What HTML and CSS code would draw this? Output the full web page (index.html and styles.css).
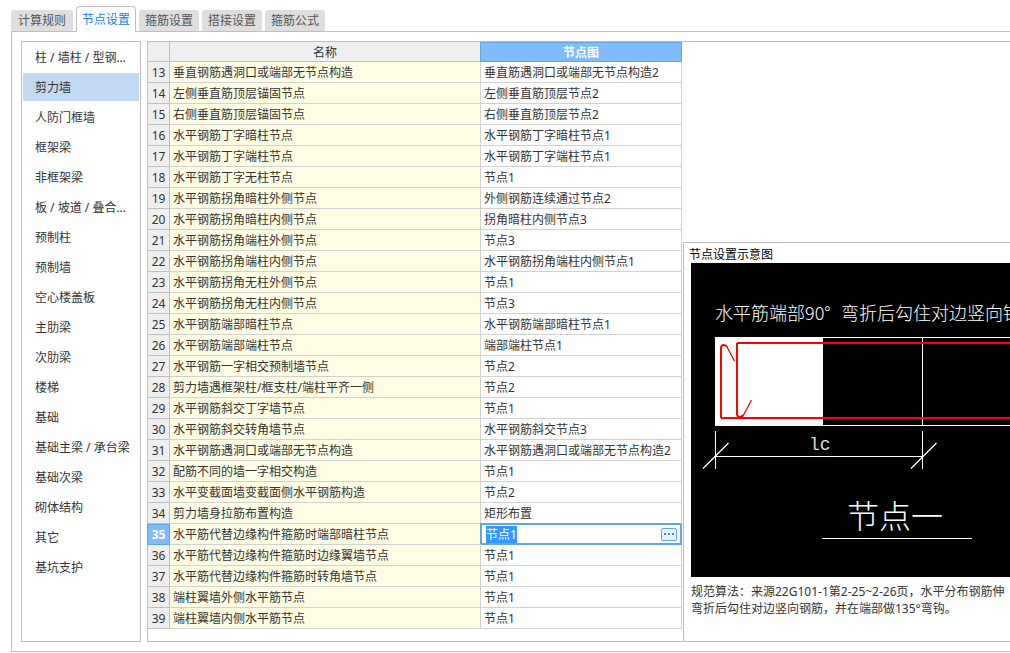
FILE: index.html
```html
<!DOCTYPE html>
<html lang="zh-CN">
<head>
<meta charset="utf-8">
<title>节点设置</title>
<link rel="stylesheet" href="styles.css">
</head>
<body>
<main class="settings">
  <nav class="tabs" role="tablist">
    <button class="tab tab-first" role="tab">计算规则</button>
    <button class="tab tab-active" role="tab" aria-selected="true">节点设置</button>
    <button class="tab" role="tab">箍筋设置</button>
    <button class="tab" role="tab">搭接设置</button>
    <button class="tab" role="tab">箍筋公式</button>
  </nav>
  <section class="page">
    <nav class="categories">
      <button class="category">柱 / 墙柱 / 型钢...</button>
      <button class="category category-active">剪力墙</button>
      <button class="category">人防门框墙</button>
      <button class="category">框架梁</button>
      <button class="category">非框架梁</button>
      <button class="category">板 / 坡道 / 叠合...</button>
      <button class="category">预制柱</button>
      <button class="category">预制墙</button>
      <button class="category">空心楼盖板</button>
      <button class="category">主肋梁</button>
      <button class="category">次肋梁</button>
      <button class="category">楼梯</button>
      <button class="category">基础</button>
      <button class="category">基础主梁 / 承台梁</button>
      <button class="category">基础次梁</button>
      <button class="category">砌体结构</button>
      <button class="category">其它</button>
      <button class="category">基坑支护</button>
    </nav>
    <div class="workspace">
      <table class="nodes">
        <colgroup><col class="col-number"><col class="col-name"><col class="col-node"></colgroup>
        <thead>
          <tr><th></th><th>名称</th><th class="head-active">节点图</th></tr>
        </thead>
        <tbody>
          <tr><th>13</th><td>垂直钢筋遇洞口或端部无节点构造</td><td>垂直筋遇洞口或端部无节点构造2</td></tr>
          <tr><th>14</th><td>左侧垂直筋顶层锚固节点</td><td>左侧垂直筋顶层节点2</td></tr>
          <tr><th>15</th><td>右侧垂直筋顶层锚固节点</td><td>右侧垂直筋顶层节点2</td></tr>
          <tr><th>16</th><td>水平钢筋丁字暗柱节点</td><td>水平钢筋丁字暗柱节点1</td></tr>
          <tr><th>17</th><td>水平钢筋丁字端柱节点</td><td>水平钢筋丁字端柱节点1</td></tr>
          <tr><th>18</th><td>水平钢筋丁字无柱节点</td><td>节点1</td></tr>
          <tr><th>19</th><td>水平钢筋拐角暗柱外侧节点</td><td>外侧钢筋连续通过节点2</td></tr>
          <tr><th>20</th><td>水平钢筋拐角暗柱内侧节点</td><td>拐角暗柱内侧节点3</td></tr>
          <tr><th>21</th><td>水平钢筋拐角端柱外侧节点</td><td>节点3</td></tr>
          <tr><th>22</th><td>水平钢筋拐角端柱内侧节点</td><td>水平钢筋拐角端柱内侧节点1</td></tr>
          <tr><th>23</th><td>水平钢筋拐角无柱外侧节点</td><td>节点1</td></tr>
          <tr><th>24</th><td>水平钢筋拐角无柱内侧节点</td><td>节点3</td></tr>
          <tr><th>25</th><td>水平钢筋端部暗柱节点</td><td>水平钢筋端部暗柱节点1</td></tr>
          <tr><th>26</th><td>水平钢筋端部端柱节点</td><td>端部端柱节点1</td></tr>
          <tr><th>27</th><td>水平钢筋一字相交预制墙节点</td><td>节点2</td></tr>
          <tr><th>28</th><td>剪力墙遇框架柱/框支柱/端柱平齐一侧</td><td>节点2</td></tr>
          <tr><th>29</th><td>水平钢筋斜交丁字墙节点</td><td>节点1</td></tr>
          <tr><th>30</th><td>水平钢筋斜交转角墙节点</td><td>水平钢筋斜交节点3</td></tr>
          <tr><th>31</th><td>水平钢筋遇洞口或端部无节点构造</td><td>水平钢筋遇洞口或端部无节点构造2</td></tr>
          <tr><th>32</th><td>配筋不同的墙一字相交构造</td><td>节点1</td></tr>
          <tr><th>33</th><td>水平变截面墙变截面侧水平钢筋构造</td><td>节点2</td></tr>
          <tr><th>34</th><td>剪力墙身拉筋布置构造</td><td>矩形布置</td></tr>
          <tr>
            <th class="number-active">35</th>
            <td>水平筋代替边缘构件箍筋时端部暗柱节点</td>
            <td class="editing">
              <div class="editor">
                <input class="editor-input" type="text" value="节点1" aria-label="节点图">
                <button class="editor-more" aria-label="更多">
                  <svg width="10" height="2" viewBox="0 0 10 2"><path d="M0 0h2v2H0zM4 0h2v2H4zM8 0h2v2H8z" fill="#3f8ce0"/></svg>
                </button>
              </div>
            </td>
          </tr>
          <tr><th>36</th><td>水平筋代替边缘构件箍筋时边缘翼墙节点</td><td>节点1</td></tr>
          <tr><th>37</th><td>水平筋代替边缘构件箍筋时转角墙节点</td><td>节点1</td></tr>
          <tr><th>38</th><td>端柱翼墙外侧水平筋节点</td><td>节点1</td></tr>
          <tr><th>39</th><td>端柱翼墙内侧水平筋节点</td><td>节点1</td></tr>
        </tbody>
      </table>
      <aside class="preview">
        <h2 class="preview-title">节点设置示意图</h2>
        <svg class="drawing" role="img" aria-label="节点一">
          <text class="cad cad-note" x="24" y="57">水平筋端部90°</text>
          <text class="cad cad-note" x="150" y="57">弯折后勾住对边竖向钢</text>
          <g fill="#fff" shape-rendering="crispEdges">
            <rect x="24" y="74" width="108" height="89"/>
            <rect x="24" y="74" width="100%" height="1"/>
            <rect x="24" y="162" width="100%" height="1"/>
            <rect x="231" y="74" width="1" height="89"/>
            <rect x="24" y="168" width="1" height="38"/>
            <rect x="231" y="168" width="1" height="38"/>
            <rect x="24" y="193" width="208" height="1"/>
            <rect x="131" y="275" width="150" height="1"/>
          </g>
          <path d="M12 205.500L37.500 180M220 205.500L245.500 180" stroke="#fff" stroke-width="1.300" fill="none"/>
          <g fill="#f00" shape-rendering="crispEdges">
            <rect x="46" y="79" width="100%" height="2"/>
            <rect x="30" y="154" width="100%" height="2"/>
            <rect x="29" y="84" width="2" height="71"/>
            <rect x="45" y="80" width="2" height="72"/>
          </g>
          <path d="M30 85Q30 82 33 82Q35 82 36 84M46 151Q46 154 49 154Q51 154 52 152" stroke="#f00" stroke-width="2" fill="none"/>
          <path d="M35.500 83L43.500 98M51.500 154L60.500 137" stroke="#f00" fill="none" stroke-width="1.300"/>
          <text class="cad cad-dimension" x="118" y="187">lc</text>
          <text class="cad cad-title" x="156" y="265">节点一</text>
        </svg>
        <p class="preview-note">规范算法：来源22G101-1第2-25~2-26页，水平分布钢筋伸<br>弯折后勾住对边竖向钢筋，并在端部做135°弯钩。</p>
      </aside>
    </div>
  </section>
</main>
<script src="select.js"></script>
</body>
</html>
```

FILE: styles.css
```css
* {
  box-sizing: border-box;
}

body {
  margin: 0;
  background: #fff;
  color: #333;
  font: 12px/16px "Noto Sans", "Noto Sans CJK SC", sans-serif;
  overflow-x: hidden;
}

button,
input {
  font: inherit;
  color: inherit;
  margin: 0;
  padding: 0;
  border: 0;
  background: none;
}

.settings {
  padding: 6px 0 1px 11px;
}

.tabs {
  display: flex;
  align-items: flex-end;
  gap: 3px;
}

.tab {
  height: 21px;
  padding: 1px 6px 0;
  border-radius: 3px 3px 0 0;
  background: #dedede;
  color: #555;
}

.tab-first {
  padding: 1px 7px 0;
}

.tab-active {
  position: relative;
  height: 26px;
  margin-bottom: -1px;
  padding: 0 5px;
  border: 1px solid #bfbfbf;
  border-bottom: 0;
  border-radius: 4px 4px 0 0;
  background: #fff;
  color: #1a7ce0;
}

.page {
  display: flex;
  gap: 6px;
  padding: 9px 0 9px 9px;
  border: 1px solid #bfbfbf;
  border-right: 0;
}

.categories {
  display: flex;
  flex: none;
  flex-direction: column;
  gap: 2px;
  width: 120px;
  padding: 1px;
  border: 1px solid #bfbfbf;
}

.category {
  height: 28px;
  padding: 2px 0 0 12px;
  text-align: left;
  white-space: nowrap;
}

.category-active {
  background: #c2d9f2;
}

.workspace {
  display: flex;
  flex: 1;
  min-width: 0;
  border: 1px solid #bfbfbf;
  border-right: 0;
}

.nodes {
  flex: none;
  align-self: flex-start;
  width: 534px;
  margin-bottom: 12px;
  border-spacing: 0;
  table-layout: fixed;
}

.col-number {
  width: 22px;
}

.col-name {
  width: 311px;
}

.col-node {
  width: 201px;
}

.nodes th,
.nodes td {
  height: 21px;
  padding: 2px 3px 0;
  border: solid #d2d2d2;
  border-width: 0 1px 1px 0;
  white-space: nowrap;
}

.nodes th {
  padding: 2px 0 0;
  border-color: #bfbfbf;
  background: #efefef;
  font-weight: 400;
  text-align: center;
}

.nodes thead th {
  height: 20px;
}

.nodes td:nth-child(2) {
  background: #fffee5;
}

.nodes .head-active,
.nodes .number-active {
  border-color: #64a5e8;
  background: #80bbfb;
  box-shadow: -1px 0 #64a5e8, inset 0 1px #64a5e8;
  color: #fff;
  font-weight: 700;
}

.nodes .editing {
  padding: 0 4px 0 5px;
  border-color: #64a5e8;
  box-shadow: -1px -1px #64a5e8, inset 1px 1px #64a5e8, inset -1px -1px #64a5e8;
}

.editor {
  display: flex;
  align-items: center;
}

.editor-input {
  flex: 1;
  min-width: 0;
  height: 17px;
  line-height: 17px;
  outline: 0;
}

.editor-input::selection {
  background: #3399ff;
  color: #fff;
}

.editor-more {
  display: flex;
  align-items: center;
  justify-content: center;
  width: 16px;
  height: 13px;
  border: 1px solid #64a5e8;
  border-radius: 2px;
  background: #eaf2fb;
}

.preview {
  flex: 1;
  align-self: flex-end;
  min-width: 0;
  margin-left: 1px;
  padding: 0 0 24px 7px;
  border: solid #bfbfbf;
  border-width: 1px 0 0 1px;
  overflow: hidden;
}

.preview-title {
  margin: 0 0 0 -2px;
  padding-top: 4px;
  color: #000;
  font-size: 12px;
  font-weight: 400;
  line-height: 16px;
}

.drawing {
  display: block;
  width: 100%;
  height: 314px;
  background: #000;
}

.cad {
  fill: #fff;
  font-family: "Noto Sans CJK SC", sans-serif;
  font-weight: 300;
}

.cad-note {
  font-size: 18px;
}

.cad-dimension {
  fill: #ddd;
  font-family: "Liberation Mono", monospace;
  font-size: 18px;
}

.cad-title {
  font-size: 32px;
}

.preview-note {
  margin: 6px 0 0;
  line-height: 17px;
  white-space: nowrap;
}
```

FILE: select.js
```js
const editorInput = document.querySelector(".editor-input");
editorInput.focus();
editorInput.select();
```
